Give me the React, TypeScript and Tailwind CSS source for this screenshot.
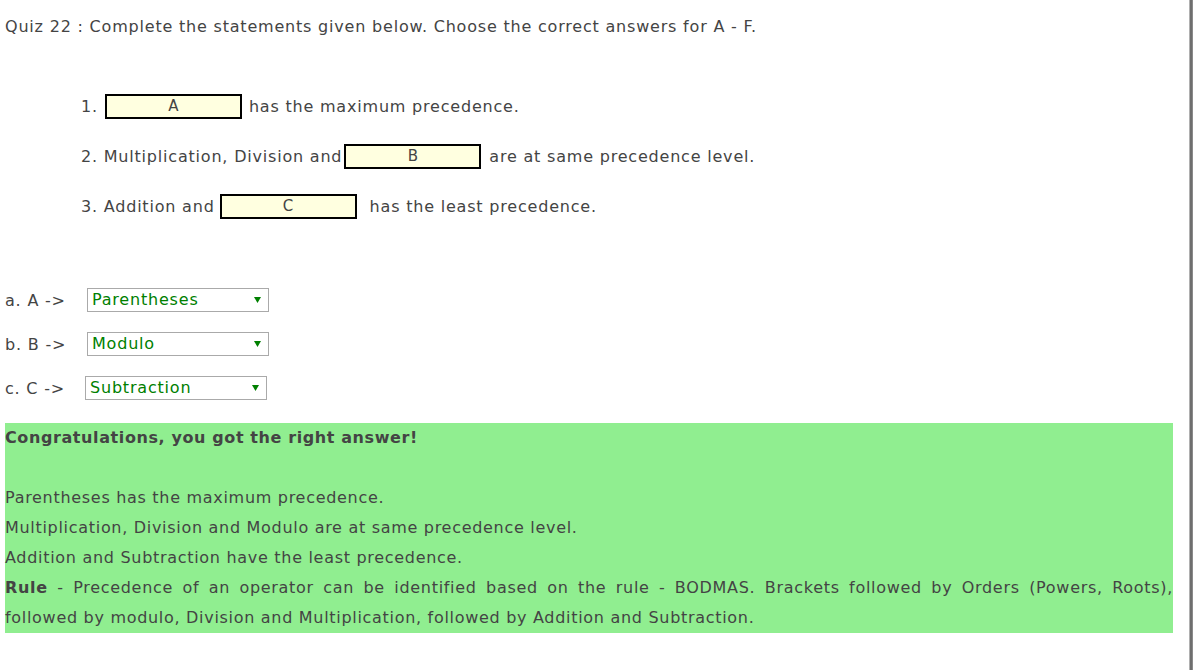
import React from "react";

const font = { fontFamily: '"DejaVu Sans", Verdana, sans-serif' };

function Blank({ label }: { label: string }) {
  return (
    <span className="inline-flex h-[25px] w-[137px] items-center justify-center border-2 border-black bg-[#ffffe0] text-[15px] tracking-normal text-[#444]">
      {label}
    </span>
  );
}

function Select({ value }: { value: string }) {
  return (
    <div className="flex h-[24px] w-[182px] items-center justify-between border border-[#aaaaaa] bg-white pl-[4px] pr-[7px] text-[#008000]">
      <span>{value}</span>
      <svg width="7" height="6" viewBox="0 0 7 6">
        <polygon points="0,0 7,0 3.5,6" fill="#008000" />
      </svg>
    </div>
  );
}

export default function App() {
  return (
    <div className="flex h-[670px] w-full bg-white text-[16px] tracking-[0.8px] text-[#444]" style={font}>
      <div className="flex-1 pl-[5px] pr-[16px]">
        <div className="pt-[17px] leading-[20px]">
          Quiz 22 : Complete the statements given below. Choose the correct answers for A - F.
        </div>

        <div className="mt-[57px] flex flex-col gap-[25px] pl-[76px]">
          <div className="flex h-[25px] items-center">
            <span>1.</span>
            <span className="ml-[7px]">
              <Blank label="A" />
            </span>
            <span className="ml-[7px]">has the maximum precedence.</span>
          </div>
          <div className="flex h-[25px] items-center">
            <span>2. Multiplication, Division and</span>
            <span className="ml-[2px]">
              <Blank label="B" />
            </span>
            <span className="ml-[8px]">are at same precedence level.</span>
          </div>
          <div className="flex h-[25px] items-center">
            <span>3. Addition and</span>
            <span className="ml-[5px]">
              <Blank label="C" />
            </span>
            <span className="ml-[13px]">has the least precedence.</span>
          </div>
        </div>

        <div className="mt-[69px] flex flex-col gap-[20px]">
          <div className="flex h-[24px] items-center">
            <span className="w-[82px] pt-[2px]">a. A -&gt;</span>
            <Select value="Parentheses" />
          </div>
          <div className="flex h-[24px] items-center">
            <span className="w-[82px] pt-[2px]">b. B -&gt;</span>
            <Select value="Modulo" />
          </div>
          <div className="flex h-[24px] items-center">
            <span className="w-[80px] pt-[2px]">c. C -&gt;</span>
            <Select value="Subtraction" />
          </div>
        </div>

        <div className="mt-[23px] bg-[#90ee90] leading-[30px]">
          <div className="font-bold tracking-[0.6px]">Congratulations, you got the right answer!</div>
          <div className="h-[30px]" />
          <div className="tracking-[0.7px]">Parentheses has the maximum precedence.</div>
          <div className="tracking-[0.7px]">Multiplication, Division and Modulo are at same precedence level.</div>
          <div className="tracking-[0.7px]">Addition and Subtraction have the least precedence.</div>
          <p className="text-justify tracking-[0.7px]">
            <b>Rule</b> - Precedence of an operator can be identified based on the rule - BODMAS. Brackets followed by
            Orders (Powers, Roots), followed by modulo, Division and Multiplication, followed by Addition and
            Subtraction.
          </p>
        </div>
      </div>
      <div className="flex h-full w-[4px]">
        <div className="w-[1px] bg-[#b0b0b0]" />
        <div className="w-[2px] bg-[#6e6e6e]" />
        <div className="w-[1px] bg-[#8a8a8a]" />
      </div>
    </div>
  );
}
